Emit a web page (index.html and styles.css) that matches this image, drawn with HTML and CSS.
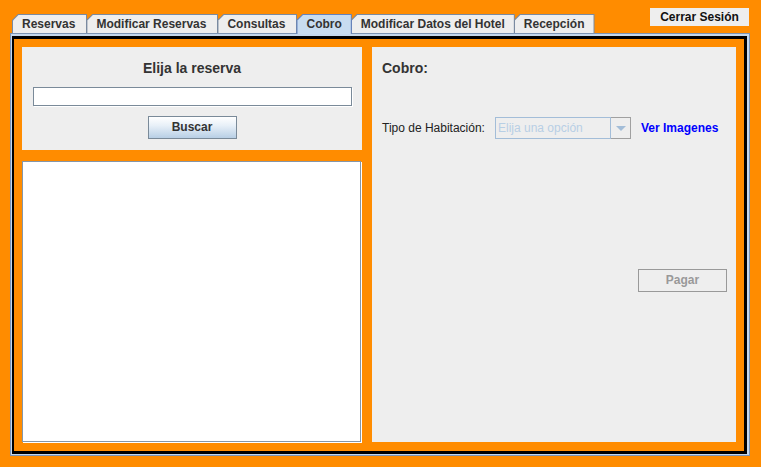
FILE: index.html
```html
<!DOCTYPE html>
<html lang="es">
<head>
<meta charset="utf-8">
<title>Cobro</title>
<link rel="stylesheet" href="styles.css">
</head>
<body>
<div class="header">
  <div class="tabs">
    <div class="tab"><span>Reservas</span></div>
    <div class="tab"><span>Modificar Reservas</span></div>
    <div class="tab"><span>Consultas</span></div>
    <div class="tab tab-selected"><span>Cobro</span></div>
    <div class="tab tab-narrow"><span>Modificar Datos del Hotel</span></div>
    <div class="tab tab-narrow"><span>Recepción</span></div>
  </div>
  <div class="logout">Cerrar Sesión</div>
</div>
<div class="tabpanel">
  <div class="frame">
    <div class="left-col">
      <div class="search-panel">
        <div class="panel-title">Elija la reserva</div>
        <div class="textfield"></div>
        <div class="btn btn-buscar">Buscar</div>
      </div>
      <div class="list"></div>
    </div>
    <div class="right-col">
      <div class="cobro-title">Cobro:</div>
      <div class="tipo-row">
        <span class="label">Tipo de Habitación:</span>
        <div class="combo">
          <div class="combo-text">Elija una opción</div>
          <div class="combo-arrow">
            <svg width="10" height="5" viewBox="0 0 10 5"><polygon points="0,0 10,0 5,5" fill="#a3bdd8"/></svg>
          </div>
        </div>
        <span class="link">Ver Imagenes</span>
      </div>
      <div class="btn btn-pagar">Pagar</div>
    </div>
  </div>
</div>
</body>
</html>
```

FILE: styles.css
```css
html, body {
  margin: 0;
  padding: 0;
  background: #ff8c00;
  font-family: "Liberation Sans", Arial, sans-serif;
  color: #333333;
}

body {
  width: 761px;
  height: 467px;
  overflow: hidden;
}

.header {
  height: 33px;
  display: flex;
  align-items: flex-end;
  padding-left: 12px;
  box-sizing: border-box;
}

.tabs {
  display: flex;
  align-items: flex-end;
}

.tab {
  height: 19px;
  box-sizing: border-box;
  padding: 1px 1px 0 1px;
  background: #7a8aa0;
  clip-path: polygon(0 6px, 6px 0, 100% 0, 100% 100%, 0 100%);
  margin-left: -1px;
}

.tab:first-child {
  margin-left: 0;
}

.tab span {
  display: block;
  height: 18px;
  line-height: 18px;
  padding: 0 11px 0 9px;
  background: #eeeeee;
  font-size: 12px;
  font-weight: bold;
  color: #333333;
  white-space: nowrap;
  clip-path: polygon(0 5.5px, 5.5px 0, 100% 0, 100% 100%, 0 100%);
}

.tab-narrow span {
  padding: 0 9px 0 9px;
}

.tab-selected {
  background: #6382bf;
  position: relative;
  z-index: 2;
  height: 20px;
  margin-bottom: -1px;
}

.tab-selected span {
  background: #c8dcf0;
  height: 19px;
  padding: 0 9px 0 9px;
}

.logout {
  margin-left: auto;
  align-self: flex-start;
  margin-top: 8px;
  margin-right: 12px;
  width: 99px;
  height: 18px;
  line-height: 18px;
  background: #eeeeee;
  text-align: center;
  font-size: 12px;
  font-weight: bold;
  color: #111111;
}

.tabpanel {
  margin-left: 10px;
  width: 740px;
  height: 423px;
  box-sizing: border-box;
  border: 1px solid #7c94b4;
  background: #c4d8ee;
  padding: 2px 2px 1px 1px;
}

.frame {
  height: 100%;
  box-sizing: border-box;
  border: 3px solid #000000;
  border-left-width: 2px;
  background: #ff8c00;
  padding: 8px 8px 9px 8px;
  display: flex;
  gap: 10px;
}

.left-col {
  width: 340px;
  display: flex;
  flex-direction: column;
  gap: 11px;
}

.search-panel {
  height: 103px;
  background: #eeeeee;
  display: flex;
  flex-direction: column;
  align-items: center;
  box-sizing: border-box;
  padding-top: 13px;
}

.panel-title {
  font-size: 14px;
  font-weight: bold;
  line-height: 17px;
  height: 17px;
  color: #333333;
}

.textfield {
  margin-top: 10px;
  width: 319px;
  height: 19px;
  box-sizing: border-box;
  background: #ffffff;
  border: 1px solid #7a8a99;
  box-shadow: 1px 1px 0 #ffffff;
}

.btn {
  box-sizing: border-box;
  width: 89px;
  height: 23px;
  line-height: 21px;
  text-align: center;
  font-size: 12px;
  font-weight: bold;
}

.btn-buscar {
  margin-top: 10px;
  border: 1px solid #7a8a99;
  background: linear-gradient(to bottom, #ffffff 0%, #e8f0f8 40%, #b8cfe5 100%);
  color: #333333;
}

.list {
  flex: 1;
  background: #ffffff;
  border: 1px solid #8596a8;
  box-shadow: 1px 1px 0 #ffffff;
  margin-right: 1px;
}

.right-col {
  flex: 1;
  background: #eeeeee;
  display: flex;
  flex-direction: column;
  padding-left: 10px;
  padding-top: 13px;
  box-sizing: border-box;
}

.cobro-title {
  font-size: 14px;
  font-weight: bold;
  line-height: 17px;
  height: 17px;
  color: #333333;
}

.tipo-row {
  margin-top: 40px;
  height: 22px;
  display: flex;
  align-items: center;
}

.label {
  font-size: 12px;
  color: #222222;
  width: 113px;
  white-space: nowrap;
}

.combo {
  width: 136px;
  height: 22px;
  display: flex;
}

.combo-text {
  width: 116px;
  height: 22px;
  box-sizing: border-box;
  border: 1px solid #a3bdd8;
  background: #eeeeee;
  color: #b8cfe5;
  font-size: 12px;
  line-height: 20px;
  padding-left: 2px;
  white-space: nowrap;
  overflow: hidden;
}

.combo-arrow {
  width: 20px;
  height: 22px;
  box-sizing: border-box;
  border: 1px solid #a0a0a0;
  border-left: none;
  background: #eeeeee;
  display: flex;
  align-items: center;
  justify-content: center;
}

.link {
  margin-left: 10px;
  font-size: 12px;
  font-weight: bold;
  color: #0000ff;
  white-space: nowrap;
}

.btn-pagar {
  margin-top: 130px;
  align-self: flex-end;
  margin-right: 9px;
  border: 1px solid #999999;
  background: #eeeeee;
  color: #999999;
}
```
